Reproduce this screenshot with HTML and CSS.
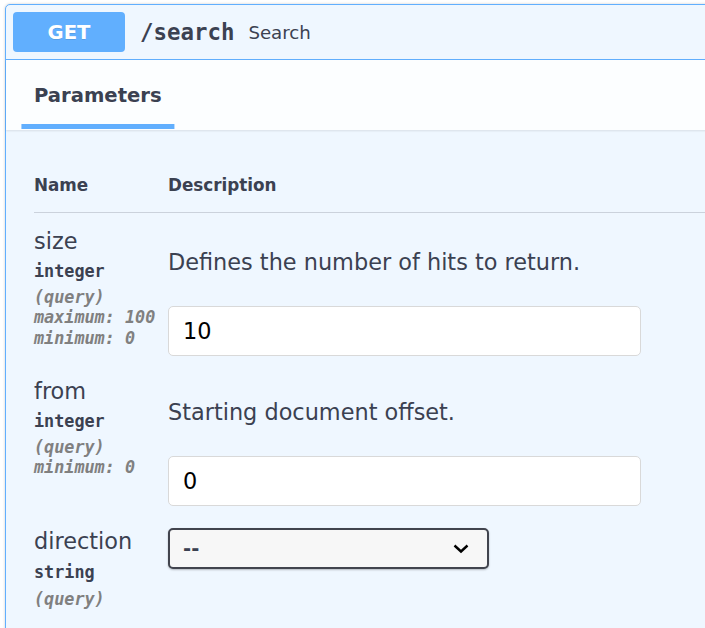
FILE: index.html
```html
<!DOCTYPE html>
<html lang="en">
<head>
<meta charset="utf-8">
<title>GET /search</title>
<link rel="stylesheet" href="styles.css">
</head>
<body>
<div class="opblock">
  <div class="summary">
    <span class="method">GET</span>
    <span class="path">/search</span>
    <span class="summary-desc">Search</span>
  </div>
  <div class="section-header">
    <div class="tab">Parameters</div>
  </div>
  <div class="table-container">
    <div class="params-head">
      <div>Name</div>
      <div>Description</div>
    </div>
    <div class="param-row">
      <div class="name-col">
        <div class="param-name">size</div>
        <div class="param-type">integer</div>
        <div class="param-in">(query)</div>
        <div class="param-ext">maximum: 100</div>
        <div class="param-ext">minimum: 0</div>
      </div>
      <div class="desc-col">
        <p class="param-desc">Defines the number of hits to return.</p>
        <input class="param-input" type="text" value="10">
      </div>
    </div>
    <div class="param-row">
      <div class="name-col">
        <div class="param-name">from</div>
        <div class="param-type">integer</div>
        <div class="param-in">(query)</div>
        <div class="param-ext">minimum: 0</div>
      </div>
      <div class="desc-col">
        <p class="param-desc">Starting document offset.</p>
        <input class="param-input" type="text" value="0">
      </div>
    </div>
    <div class="param-row">
      <div class="name-col">
        <div class="param-name">direction</div>
        <div class="param-type param-type-last">string</div>
        <div class="param-in param-in-last">(query)</div>
      </div>
      <div class="desc-col">
        <div class="select-wrap">
          <select class="param-select">
            <option>--</option>
          </select>
          <svg class="chevron" width="16" height="10" viewBox="0 0 16 10" aria-hidden="true">
            <polyline points="1.5,1.5 8,7.5 14.5,1.5" fill="none" stroke="#000" stroke-width="2.4"/>
          </svg>
        </div>
      </div>
    </div>
  </div>
</div>
</body>
</html>
```

FILE: styles.css
```css
html, body {
  margin: 0;
  padding: 0;
  background: #fff;
  overflow: hidden;
}

body {
  font-family: "DejaVu Sans", sans-serif;
  color: #3b4151;
  width: 705px;
  height: 628px;
}

.opblock {
  margin: 4px 0 0 5px;
  width: 800px;
  min-height: 700px;
  border: 1px solid #61affe;
  border-radius: 5px;
  background: #eff7ff;
  box-shadow: 0 0 3px rgba(0, 0, 0, 0.19);
}

.summary {
  display: flex;
  align-items: center;
  height: 40px;
  padding: 7px;
  border-bottom: 1px solid #61affe;
}

.method {
  display: flex;
  align-items: center;
  justify-content: center;
  width: 112px;
  height: 40px;
  border-radius: 4px;
  background: #61affe;
  color: #fff;
  font-weight: bold;
  font-size: 19.6px;
  text-shadow: 0 1px 0 rgba(0, 0, 0, 0.1);
}

.path {
  padding: 0 14px 0 15px;
  font-family: "DejaVu Sans Mono", monospace;
  font-weight: bold;
  font-size: 22.4px;
  color: #3b4151;
}

.summary-desc {
  font-size: 18.2px;
  color: #3b4151;
}

.section-header {
  display: flex;
  align-items: center;
  height: 70px;
  padding: 0 28px;
  background: rgba(255, 255, 255, 0.8);
  box-shadow: 0 1px 2px rgba(0, 0, 0, 0.1);
}

.tab {
  position: relative;
  margin-top: 2px;
  font-weight: bold;
  font-size: 19.6px;
  line-height: 24px;
}

.tab::after {
  content: "";
  position: absolute;
  left: 50%;
  bottom: -21px;
  width: 120%;
  height: 5px;
  transform: translateX(-50%);
  background: #61affe;
}

.table-container {
  padding: 28px 0 0 28px;
}

.params-head {
  display: grid;
  grid-template-columns: 134px 1fr;
  align-items: center;
  height: 54px;
  border-bottom: 1px solid rgba(59, 65, 81, 0.2);
  font-weight: bold;
  font-size: 16.8px;
}

.param-row {
  display: grid;
  grid-template-columns: 134px 1fr;
  padding-top: 15px;
}

.param-name {
  font-size: 22.4px;
  line-height: 26px;
}

.param-type {
  margin-top: 7px;
  font-family: "DejaVu Sans Mono", monospace;
  font-weight: bold;
  font-size: 16.8px;
  line-height: 20px;
}

.param-type-last {
  margin-top: 8px;
}

.param-in {
  margin-top: 6px;
  font-family: "DejaVu Sans Mono", monospace;
  font-style: italic;
  font-weight: bold;
  font-size: 16.8px;
  line-height: 20px;
  color: #808080;
}

.param-in-last {
  margin-top: 7px;
}

.param-ext {
  font-family: "DejaVu Sans Mono", monospace;
  font-style: italic;
  font-weight: bold;
  font-size: 16.8px;
  line-height: 21px;
  color: #808080;
}

.desc-col {
  display: flex;
  flex-direction: column;
  align-items: flex-start;
}

.param-desc {
  margin: 20px 0 30px;
  font-size: 22.4px;
  line-height: 28px;
}

.param-input {
  box-sizing: border-box;
  width: 473px;
  height: 50px;
  margin: 0 0 7px;
  padding: 0 14px;
  border: 1px solid #d9d9d9;
  border-radius: 5px;
  background: #fff;
  font-family: "DejaVu Sans", sans-serif;
  font-size: 22.4px;
  color: #000;
  outline: none;
}

.select-wrap {
  position: relative;
  width: 321px;
  margin-top: 0;
}

.param-select {
  box-sizing: border-box;
  display: block;
  width: 321px;
  height: 41px;
  padding: 0 0 0 13px;
  border: 2px solid #41444e;
  border-radius: 5px;
  background: #f7f7f7;
  box-shadow: 0 1px 2px 0 rgba(0, 0, 0, 0.25);
  font-family: "DejaVu Sans", sans-serif;
  font-weight: bold;
  font-size: 19.6px;
  color: #3b4151;
  appearance: none;
  -webkit-appearance: none;
  outline: none;
}

.chevron {
  position: absolute;
  right: 20px;
  top: 16px;
  pointer-events: none;
}
```
